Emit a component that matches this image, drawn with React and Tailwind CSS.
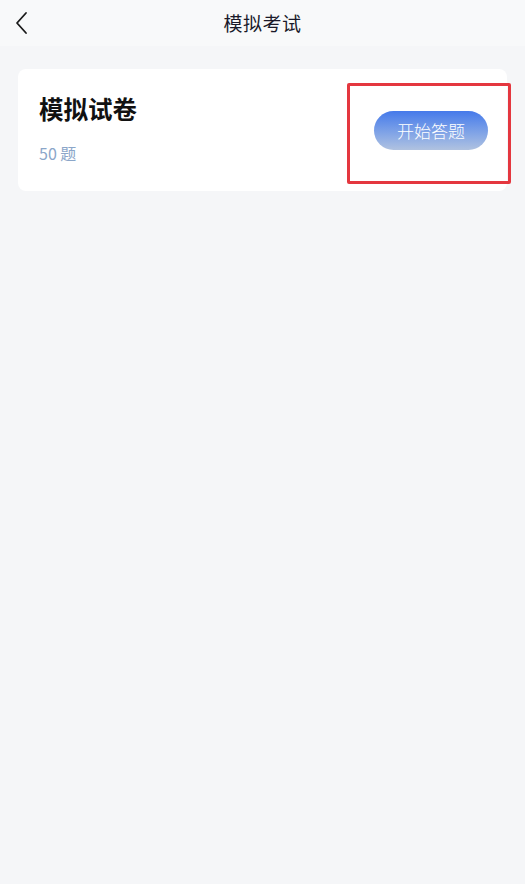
import React from "react";

const font = { fontFamily: '"Noto Sans CJK SC", "Noto Sans", sans-serif' };

export default function App() {
  return (
    <div className="min-h-[884px] w-full bg-[#f5f6f8]" style={font}>
      {/* Header */}
      <div className="relative flex h-[46px] items-center justify-center bg-[#f8f9fa]">
        <button className="absolute left-[12px] top-[10px] text-[#111]">
          <svg width="20" height="26" viewBox="0 0 20 26" fill="none">
            <path d="M14 3 L5 13 L14 23" stroke="#1a1a1a" strokeWidth="1.8" strokeLinecap="round" strokeLinejoin="round" />
          </svg>
        </button>
        <h1 className="text-[19px] font-normal text-[#1a1a2a] tracking-[0.5px]">模拟考试</h1>
      </div>

      {/* Card */}
      <div className="px-[18px] pt-[23px]">
        <div className="relative flex h-[122px] justify-between rounded-[8px] bg-white pl-[21px] pr-[19px]">
          <div className="flex flex-col pt-[24px]">
            <div className="text-[24.5px] font-bold leading-[32px] text-[#111]">模拟试卷</div>
            <div className="mt-[17px] text-[16px] leading-[22px] text-[#8ba6c9]">50 题</div>
          </div>
          <button className="mt-[42px] flex h-[39px] w-[114px] items-center justify-center rounded-full bg-gradient-to-b from-[#4579ea] to-[#b0c2e0] text-[17px] font-light text-white">
            开始答题
          </button>
          <div className="pointer-events-none absolute left-[329px] top-[14px] h-[101px] w-[164px] rounded-[2px] border-[3px] border-[#e4373f]" />
        </div>
      </div>
    </div>
  );
}
